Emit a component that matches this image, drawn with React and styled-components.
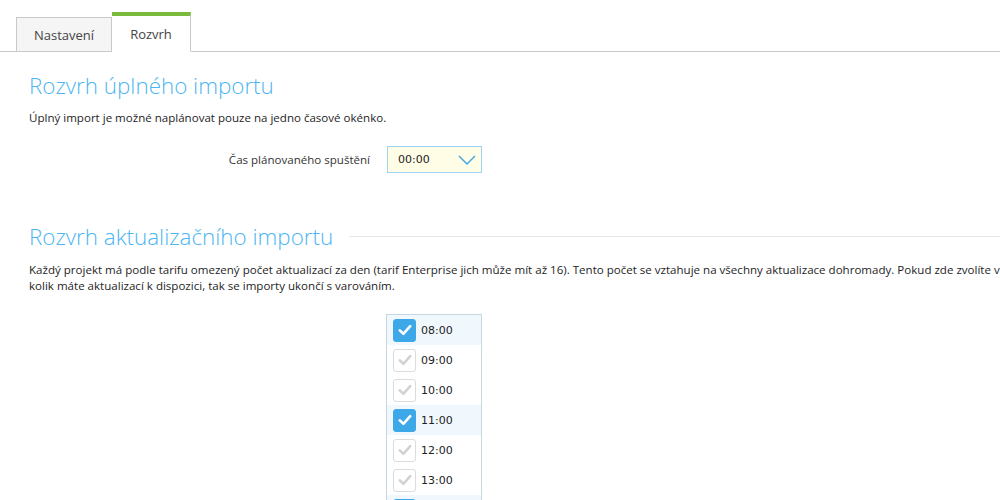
import styled, { createGlobalStyle } from "styled-components";

const GlobalStyle = createGlobalStyle`
  html, body {
    margin: 0;
    padding: 0;
    background: #ffffff;
    overflow: hidden;
  }
  body {
    font-family: "Open Sans", "Noto Sans", sans-serif;
    color: #222;
  }
`

const Page = styled.div`
  width: 1000px;
  height: 500px;
  overflow: hidden;
`

const TabBar = styled.div`
  display: flex;
  align-items: flex-end;
  height: 51px;
  padding-left: 16px;
  border-bottom: 1px solid #c9c9c9;
`

const Tab = styled.div`
  box-sizing: border-box;
  height: ${p => (p.$active ? "40px" : "35px")};
  margin-bottom: -1px;
  padding: 0 ${p => (p.$active ? "18px" : "17px")};
  display: flex;
  align-items: center;
  font-size: 13px;
  color: #444;
  background: ${p => (p.$active ? "#ffffff" : "#f5f5f5")};
  border: 1px solid #c9c9c9;
  border-left: ${p => (p.$active ? "none" : "1px solid #c9c9c9")};
  border-top: ${p => (p.$active ? "4px solid #7cba3d" : "1px solid #c9c9c9")};
  border-bottom: ${p => (p.$active ? "1px solid #ffffff" : "1px solid #c9c9c9")};
`

const Content = styled.div`
  padding: 19px 0 0 29px;
`

const Heading = styled.h2`
  display: flex;
  align-items: center;
  margin: 0;
  font-size: 22.4px;
  line-height: 30px;
  font-weight: 300;
  color: #4db6f2;
  margin-top: ${p => p.$top || "0"};

  ${p => p.$line && `
    &::after {
      content: "";
      flex: 1;
      height: 1px;
      background: #e6e6e6;
      margin-left: 16px;
      margin-top: -2px;
    }
  `}
`

const Paragraph = styled.p`
  margin: ${p => p.$margin || "9px 0 0"};
  font-size: 11.55px;
  line-height: 16px;
  white-space: nowrap;
  color: #1e1e1e;
`

const FormRow = styled.div`
  display: grid;
  grid-template-columns: 341px auto;
  column-gap: 17px;
  align-items: center;
  margin-top: 20px;
`

const Label = styled.label`
  text-align: right;
  font-size: 11.55px;
  color: #333;
`

const Select = styled.div`
  box-sizing: border-box;
  width: 95px;
  height: 27px;
  display: flex;
  align-items: center;
  justify-content: space-between;
  padding: 0 4px 0 10px;
  background: #fffde6;
  border: 1px solid #9fd3f6;
  font-family: "DejaVu Sans", Verdana, sans-serif;
  font-size: 11px;
  font-weight: 500;
  color: #222;
`

const TimeList = styled.div`
  box-sizing: border-box;
  width: 96px;
  margin: 20px 0 0 357px;
  border: 1px solid #c8d6e0;
  border-bottom: none;
`

const TimeRow = styled.div`
  height: 30px;
  display: flex;
  align-items: center;
  gap: 5px;
  padding-left: 6px;
  background: ${p => (p.$checked ? "#f0f8fe" : "#ffffff")};
  font-family: "DejaVu Sans", Verdana, sans-serif;
  font-size: 11px;
  color: #222;
`

const Box = styled.span`
  box-sizing: border-box;
  width: 23px;
  height: 23px;
  border-radius: 3px;
  display: flex;
  align-items: center;
  justify-content: center;
  background: ${p => (p.$checked ? "#3ca8e8" : "#ffffff")};
  border: 1px solid ${p => (p.$checked ? "#3ca8e8" : "#dcdcdc")};
`

function Check({ color }) {
  return (
    <svg width="14" height="12" viewBox="0 0 14 12">
      <path d="M1.8 6.4 L5.4 9.8 L12.2 2.2" fill="none" stroke={color} strokeWidth="2.6" strokeLinecap="round" strokeLinejoin="round" />
    </svg>
  );
}

const times = [
  { t: "08:00", on: true },
  { t: "09:00", on: false },
  { t: "10:00", on: false },
  { t: "11:00", on: true },
  { t: "12:00", on: false },
  { t: "13:00", on: false },
  { t: "14:00", on: true },
];

export default function App() {
  return (
    <Page>
      <GlobalStyle />
      <TabBar>
        <Tab>Nastavení</Tab>
        <Tab $active>Rozvrh</Tab>
      </TabBar>
      <Content>
        <Heading>Rozvrh úplného importu</Heading>
        <Paragraph>Úplný import je možné naplánovat pouze na jedno časové okénko.</Paragraph>
        <FormRow>
          <Label>Čas plánovaného spuštění</Label>
          <Select>
            <span>00:00</span>
            <svg width="20" height="12" viewBox="0 0 20 12">
              <path d="M2 2 L10 10 L18 2" fill="none" stroke="#3aa6e4" strokeWidth="1.4" />
            </svg>
          </Select>
        </FormRow>
        <Heading $line $top="49px">Rozvrh aktualizačního importu</Heading>
        <Paragraph $margin="10px 0 0">
          Každý projekt má podle tarifu omezený počet aktualizací za den (tarif Enterprise jich může mít až 16). Tento počet se vztahuje na všechny aktualizace dohromady. Pokud zde zvolíte více časů, než
          <br />
          kolik máte aktualizací k dispozici, tak se importy ukončí s varováním.
        </Paragraph>
        <TimeList>
          {times.map(({ t, on }) => (
            <TimeRow key={t} $checked={on}>
              <Box $checked={on}>
                <Check color={on ? "#ffffff" : "#d2d2d2"} />
              </Box>
              {t}
            </TimeRow>
          ))}
        </TimeList>
      </Content>
    </Page>
  );
}
